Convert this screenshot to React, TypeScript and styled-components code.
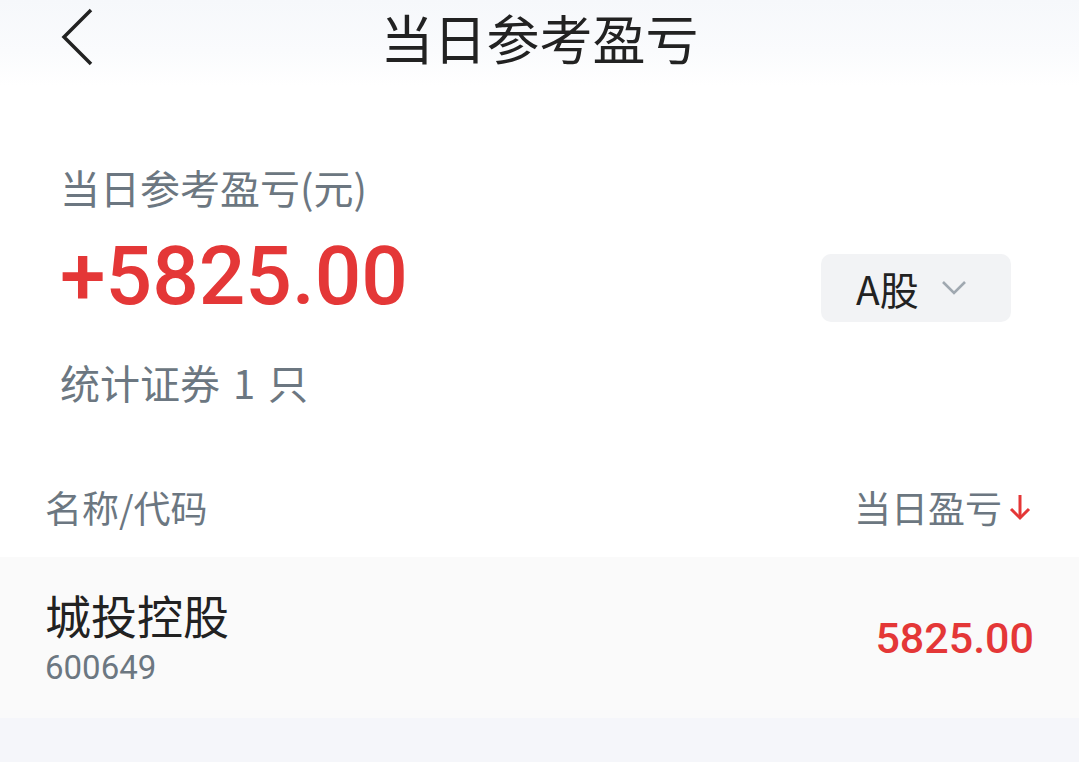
import React from "react";
import styled, { createGlobalStyle } from "styled-components";

const GlobalStyle = createGlobalStyle`
  html, body {
    margin: 0;
    padding: 0;
    background: #f5f6fa;
  }
  body {
    font-family: "Noto Sans CJK SC", "Noto Sans", sans-serif;
  }
`;

const Page = styled.div`
  display: flex;
  flex-direction: column;
  min-height: 762px;
  background: #f5f6fa;
`;

const Top = styled.div`
  background: #fff;
`;

const Header = styled.header`
  display: grid;
  grid-template-columns: 1fr auto 1fr;
  align-items: center;
  height: 74px;
  padding-bottom: 12px;
  background: linear-gradient(180deg, #f6f8fb 0%, #fafbfd 60%, #ffffff 100%);
`;

const BackButton = styled.button`
  justify-self: start;
  display: flex;
  align-items: center;
  margin-left: 60px;
  padding: 0;
  border: none;
  background: none;
  color: #222;
`;

const Title = styled.h1`
  margin: 0;
  font-size: 53px;
  line-height: 62px;
  font-weight: 400;
  color: #222;
`;

const Summary = styled.section`
  display: flex;
  flex-direction: column;
  padding: 78px 68px 0 60px;
`;

const Label = styled.div`
  font-size: 40px;
  line-height: 46px;
  color: #6c7781;
`;

const AmountRow = styled.div`
  display: flex;
  justify-content: space-between;
  align-items: flex-start;
  margin-top: 25px;
`;

const Amount = styled.div`
  font-family: Roboto, "Noto Sans", sans-serif;
  font-size: 82px;
  line-height: 82px;
  font-weight: 500;
  color: #e43737;
`;

const MarketSelect = styled.button`
  display: flex;
  align-items: center;
  gap: 22px;
  width: 190px;
  height: 68px;
  margin-top: 19px;
  padding: 0 0 0 35px;
  border: none;
  border-radius: 10px;
  background: #f2f3f5;
  font-family: "Noto Sans CJK SC", sans-serif;
  font-size: 39px;
  color: #222;
`;

const Count = styled(Label)`
  margin-top: 37px;
  word-spacing: 4px;
`;

const ListHead = styled.div`
  display: flex;
  justify-content: space-between;
  align-items: center;
  padding: 81px 47px 29px 45px;
`;

const HeadCell = styled.div`
  display: flex;
  align-items: center;
  gap: 6px;
  font-size: 37px;
  line-height: 42px;
  color: #6c7781;
`;

const StockRow = styled.div`
  display: flex;
  justify-content: space-between;
  align-items: center;
  height: 161px;
  padding: 0 45px 0 45px;
  background: #fafafa;
`;

const StockInfo = styled.div`
  display: flex;
  flex-direction: column;
  gap: 7px;
`;

const StockName = styled.div`
  font-size: 46px;
  line-height: 54px;
  color: #222;
`;

const StockCode = styled.div`
  font-family: Roboto, "Noto Sans", sans-serif;
  font-size: 33px;
  line-height: 40px;
  color: #6c7781;
`;

const StockValue = styled.div`
  font-family: Roboto, "Noto Sans", sans-serif;
  font-size: 43px;
  font-weight: 500;
  color: #e43737;
`;

const ChevronLeft = () => (
  <svg width="34" height="58" viewBox="0 0 34 58" fill="none">
    <polyline
      points="31,2 4,29 31,56"
      stroke="currentColor"
      strokeWidth="3.5"
      strokeLinejoin="miter"
    />
  </svg>
);

const ChevronDown = () => (
  <svg width="26" height="16" viewBox="0 0 26 16" fill="none">
    <polyline points="2,2 13,13 24,2" stroke="#a0a8b0" strokeWidth="2.6" />
  </svg>
);

const SortDown = () => (
  <svg width="24" height="28" viewBox="0 0 24 28" fill="none">
    <line x1="12" y1="2" x2="12" y2="25" stroke="#e43737" strokeWidth="3" />
    <polyline points="3,16 12,25 21,16" stroke="#e43737" strokeWidth="3" />
  </svg>
);

export default function App() {
  return (
    <Page>
      <GlobalStyle />
      <Top>
        <Header>
          <BackButton>
            <ChevronLeft />
          </BackButton>
          <Title>当日参考盈亏</Title>
          <span />
        </Header>
        <Summary>
          <Label>当日参考盈亏(元)</Label>
          <AmountRow>
            <Amount>+5825.00</Amount>
            <MarketSelect>
              A股
              <ChevronDown />
            </MarketSelect>
          </AmountRow>
          <Count>统计证券 1 只</Count>
        </Summary>
        <ListHead>
          <HeadCell>名称/代码</HeadCell>
          <HeadCell>
            当日盈亏
            <SortDown />
          </HeadCell>
        </ListHead>
      </Top>
      <StockRow>
        <StockInfo>
          <StockName>城投控股</StockName>
          <StockCode>600649</StockCode>
        </StockInfo>
        <StockValue>5825.00</StockValue>
      </StockRow>
    </Page>
  );
}
